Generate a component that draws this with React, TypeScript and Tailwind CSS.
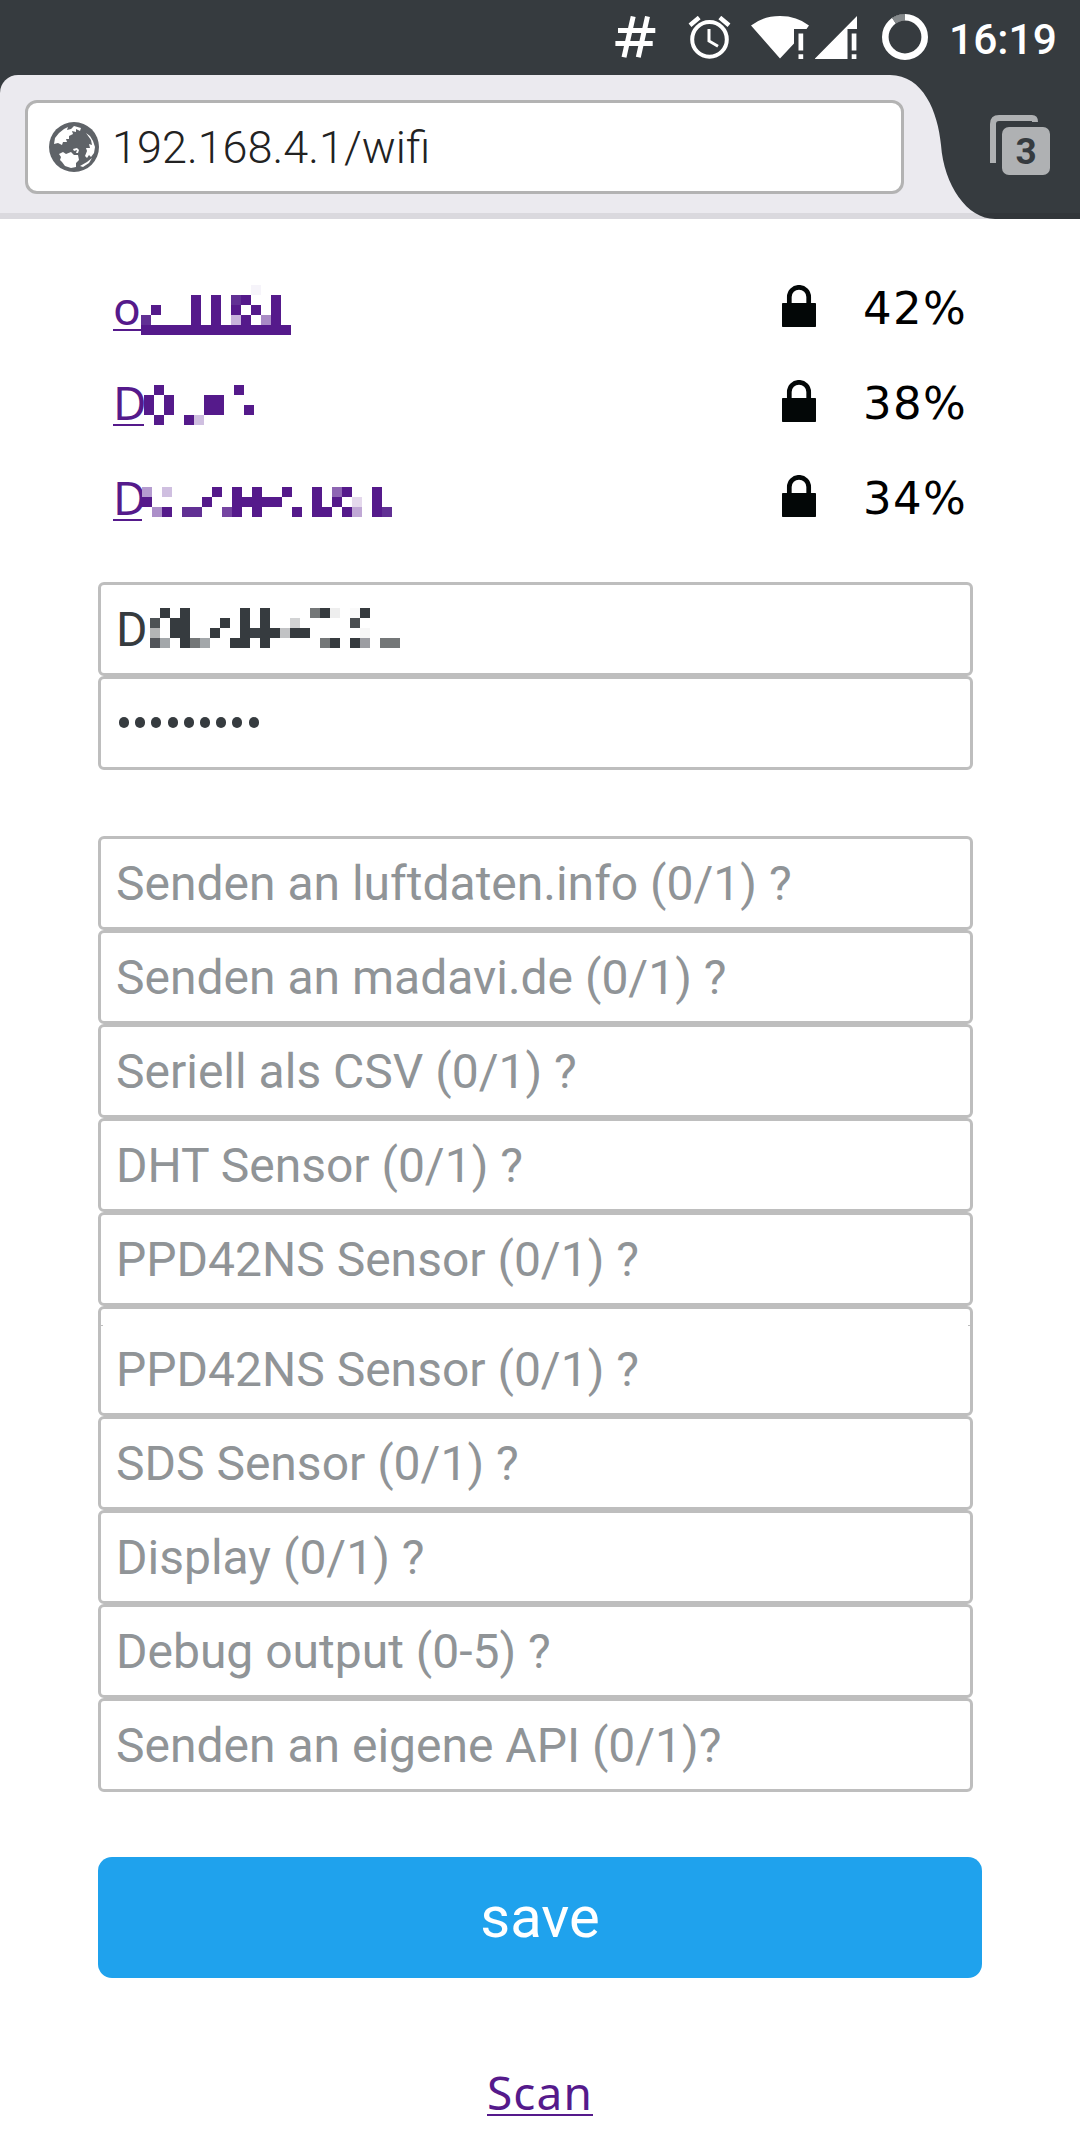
import type { ReactNode } from "react";

type Cell = [col: number, row: number, shade?: string];

const INK = "#551a8b";
const SLATE = "#363b3f";

/** Censored text, drawn as a mosaic of 10px blocks. */
function Mosaic({ cells, cols, rows, color, className }: { cells: Cell[]; cols: number; rows: number; color: string; className: string }) {
  return (
    <svg className={className} width={cols * 10} height={rows * 10} shapeRendering="crispEdges" aria-hidden="true">
      {cells.map(([c, r, shade]) => (
        <rect key={`${c}-${r}`} x={c * 10} y={r * 10} width="10" height="10" fill={shade ?? color} />
      ))}
    </svg>
  );
}

const firstMosaic: Cell[] = [
  [11, 0, "#f6f4fa"],
  [5, 1], [7, 1], [9, 1, "#613094"], [10, 1], [13, 1],
  [1, 2], [5, 2], [7, 2], [9, 2], [11, 2], [13, 2],
  [0, 3, "#613094"], [5, 3], [7, 3], [9, 3, "#c8b3db"], [10, 3], [12, 3, "#a98bc5"], [13, 3],
  ...Array.from({ length: 15 }, (_, i): Cell => [i, 4]),
];

const secondMosaic: Cell[] = [
  [1, 0], [9, 0],
  [0, 1], [2, 1], [6, 1], [7, 1],
  [0, 2], [2, 2], [6, 2], [7, 2], [10, 2],
  [1, 3], [4, 3], [5, 3, "#cfbfe0"],
];

const thirdMosaic: Cell[] = [
  [0, 0, "#b59cd0"], [2, 0, "#cfbfe0"], [7, 0], [9, 0], [11, 0], [14, 0], [17, 0], [19, 0, "#8e66b3"], [20, 0], [23, 0],
  [0, 1], [6, 1], [9, 1], [10, 1], [11, 1], [12, 1], [13, 1], [17, 1], [19, 1], [21, 1, "#e4d8ec"], [23, 1],
  [1, 2, "#ac8fc9"], [2, 2], [4, 2, "#613094"], [5, 2, "#613094"], [8, 2, "#7545a2"], [9, 2], [11, 2], [15, 2],
  [17, 2], [18, 2], [20, 2], [21, 2, "#c0a8d5"], [23, 2], [24, 2, "#613094"],
];

const ssidMosaic: Cell[] = [
  [1, 0], [3, 0], [9, 0], [11, 0], [16, 0, "#747778"], [17, 0], [18, 0, "#eeeeee"], [20, 0, "#fafafa"], [21, 0],
  [0, 1, "#4d5255"], [2, 1], [3, 1], [7, 1], [9, 1], [11, 1], [14, 1, "#d2d3d4"], [20, 1, "#4a4e51"],
  [0, 2, "#b3b5b6"], [2, 2], [3, 2], [6, 2], [9, 2], [10, 2, "#3c4146"], [11, 2], [12, 2], [13, 2, "#c1c2c4"],
  [14, 2], [15, 2], [21, 2, "#f7f7f7"],
  [0, 3, "#52555a"], [1, 3, "#a3a7aa"], [3, 3], [4, 3, "#747778"], [5, 3, "#a3a7aa"], [8, 3], [9, 3], [11, 3],
  [17, 3, "#747778"], [18, 3], [20, 3], [21, 3, "#9c9da2"], [23, 3, "#747778"], [24, 3, "#747778"],
];

function Lock() {
  return (
    <svg className="mt-[25px] shrink-0" width="34" height="42" viewBox="0 0 34 42">
      <path d="M7.3 21V12a9.7 9.7 0 0 1 19.4 0v9" fill="none" stroke="#030707" strokeWidth="4.7" />
      <rect y="18" width="34" height="24" rx="0.7" fill="#030707" />
    </svg>
  );
}

function Network({ initial, underline, mosaic, signal }: { initial: string; underline: string; mosaic: ReactNode; signal: string }) {
  return (
    <div className="flex h-[95px] items-start pr-[113px] pl-[113px] font-['Noto_Sans'] text-[46px] leading-[95px]">
      <a className={`flex shrink-0 border-b-2 border-[#551a8b] text-[#551a8b] ${underline}`}>{initial}</a>
      {mosaic}
      <div className="ml-auto flex">
        <Lock />
        <span className="w-[151px] text-right font-['DejaVu_Sans'] text-[45px] leading-[97px] tracking-[1.3px] whitespace-nowrap text-black">{signal}</span>
      </div>
    </div>
  );
}

function Field({ children, className = "h-[94px]" }: { children: ReactNode; className?: string }) {
  return (
    <div className={`flex w-[875px] items-start rounded-[6px] border-3 border-[#bebebe] bg-white pl-[15px] text-[48px] leading-[90px] whitespace-pre text-[#909497] ${className}`}>
      {children}
    </div>
  );
}

function StatusBar() {
  return (
    <div className="flex h-[75px] items-start text-white">
      <svg className="mt-4 ml-[615px]" width="41" height="42" viewBox="615 16 41 42" fill="none" stroke="currentColor" strokeWidth="5">
        <path d="M633.2 16.5 624 57.3M647.5 16.5 638.3 57.3M618 30.4h37.3M615.4 43.5h37.3" />
      </svg>
      <svg className="mt-4 ml-8" width="43" height="43" viewBox="688 16 43 43" fill="none" stroke="currentColor">
        <circle cx="709.5" cy="39.4" r="17.3" strokeWidth="4" />
        <path d="M709 29v12l9 5.2" strokeWidth="3" />
        <path d="M690 25.2 699.2 17.5M729 25.2 719.8 17.5" strokeWidth="4.4" />
      </svg>
      <svg className="mt-4 ml-[20px]" width="58" height="43" viewBox="751 16 58 43" fill="currentColor">
        <path d="M751 25.5Q763 16 780 16T809 25.5L806.5 29H794V43.5L780 58.5Z" />
        <path d="M798.5 33.5h4.7v17h-4.7zM798.5 54.3h4.7v4.7h-4.7z" />
      </svg>
      <svg className="mt-4 ml-[6px]" width="42" height="43" viewBox="815 16 42 43" fill="currentColor">
        <path d="M857 16V29H847.5V59H814.5Z" />
        <path d="M851.7 33.5h4.7v17h-4.7zM851.7 54.3h4.7v4.7h-4.7z" />
      </svg>
      <svg className="mt-[14px] ml-[25px]" width="46" height="46" viewBox="0 0 46 46" fill="none" strokeWidth="6.6">
        <circle cx="23" cy="23" r="19.7" stroke="white" />
        <path d="M12 6.7A19.7 19.7 0 0 1 23 3.3" stroke={SLATE} />
        <path d="M12 6.7A19.7 19.7 0 0 1 23 3.3" stroke="#868a8c" />
      </svg>
      <span className="mt-[15.5px] ml-[21px] text-[42.5px] leading-[48px] font-medium">16:19</span>
    </div>
  );
}

function Globe() {
  return (
    <svg className="ml-[21px] shrink-0" width="50" height="50" viewBox="0 0 50 50">
      <circle cx="25" cy="25" r="25" fill="#5f6368" />
      <g fill="white">
        <path d="M5 22 6 16 10 11 15 7 19 5 18 8 22 7 25 4 32 6 31 9 27 7 27 10 23 9 24 12 20 14 20 17 17 17 18 20 14 20 13 23 9 21Z" />
        <path d="M10 32 14 30 17 32 22 30 25 33 29 33 30 38 27 41 27 45 22 46 16 44 13 40 11 38 12 35Z" />
        <path d="M24 27 28 26 30 28 29 31 27 31 28 28 25 29Z" />
        <path d="M37 11 41 14 44 19 46 25 45 31 42 35 40 33 38 36 36 34 38 29 37 26 41 26 40 22 43 23 42 18Z" />
        <path d="M31 44 38 40 43 36 40 41 34 45Z" />
      </g>
    </svg>
  );
}

function AddressBar() {
  return (
    <div className="relative flex h-[144px]">
      <div className="relative z-10 w-[890px] shrink-0 rounded-tl-[18px] bg-[#ebeaef] pt-[25px] pl-[25px]">
        <div className="flex h-[94px] w-[879px] items-center rounded-[12px] border-3 border-[#b3b3b3] bg-white">
          <Globe />
          <span className="ml-[13px] pt-[1.5px] text-[45px] leading-[88px] font-light text-[#222222]">192.168.4.1/wifi</span>
        </div>
      </div>
      <svg className="shrink-0" width="105" height="144" viewBox="890 75 105 144">
        <path d="M890 75C923 75 938 112 941 145C944 185 967 219 995 219H890Z" fill="#ebeaef" />
      </svg>
      <svg className="mt-[40px] ml-[-5px]" width="60" height="60" viewBox="0 0 60 60">
        <path d="M3 48V9Q3 3 9 3H42Q45 3 45 7" fill="none" stroke="#afb1b3" strokeWidth="6" />
        <rect x="12" y="12" width="48" height="48" rx="7" fill="#afb1b3" />
        <text x="36" y="49" textAnchor="middle" fontSize="37" fontWeight="700" fill={SLATE}>3</text>
      </svg>
      <div className="absolute bottom-0 left-0 z-20 h-[6px] w-full bg-black/7" />
    </div>
  );
}

export default function App() {
  return (
    <div className="h-[2149px] w-[1080px] overflow-hidden bg-white font-['Roboto',sans-serif]">
      <header className="bg-[#363b3f]">
        <StatusBar />
        <AddressBar />
      </header>

      <section className="pt-[41px]">
        <Network
          initial="o"
          underline="h-[71px] w-[28px]"
          mosaic={<Mosaic className="mt-[25px] shrink-0" cells={firstMosaic} cols={15} rows={5} color={INK} />}
          signal="42%"
        />
        <Network
          initial="D"
          underline="h-[71px] w-[31px]"
          mosaic={<Mosaic className="mt-[30px] shrink-0" cells={secondMosaic} cols={11} rows={4} color={INK} />}
          signal="38%"
        />
        <Network
          initial="D"
          underline="h-[71px] w-[29px]"
          mosaic={<Mosaic className="mt-[37px] shrink-0" cells={thirdMosaic} cols={25} rows={3} color={INK} />}
          signal="34%"
        />
      </section>

      <form className="mt-[37px] ml-[98px]">
        <Field>
          <span className="w-[34px] shrink-0 text-[#363b3f]">D</span>
          <Mosaic className="mt-[23px]" cells={ssidMosaic} cols={25} rows={4} color={SLATE} />
        </Field>
        <Field>
          <div className="flex h-[86px] items-center gap-[6.2px] pl-[3px]">
            {Array.from({ length: 9 }, (_, i) => (
              <span key={i} className="h-[11px] w-[10px] rounded-full bg-[#363b3f]" />
            ))}
          </div>
        </Field>

        <div className="mt-[66px]">
          <Field>Senden an luftdaten.info (0/1) ?</Field>
          <Field>Senden an madavi.de (0/1) ?</Field>
          <Field>Seriell als CSV (0/1) ?</Field>
          <Field>DHT Sensor (0/1) ?</Field>
          <Field>PPD42NS Sensor (0/1) ?</Field>
          <Field className="relative h-[110px] pt-[16px] before:absolute before:top-[16px] before:left-0 before:h-px before:w-[2px] before:bg-[#bebebe] after:absolute after:top-[16px] after:right-0 after:h-px after:w-[2px] after:bg-[#bebebe]">
            PPD42NS Sensor (0/1) ?
          </Field>
          <Field>SDS Sensor (0/1) ?</Field>
          <Field>Display (0/1) ?</Field>
          <Field>Debug output (0-5) ?</Field>
          <Field>Senden an eigene API (0/1)?</Field>
        </div>

        <button type="button" className="mt-[65px] block h-[121px] w-[884px] rounded-[14px] bg-[#1fa2ed] text-center text-[58px] leading-[121px] text-white">
          save
        </button>
      </form>

      <div className="mt-[67px] flex justify-center">
        <a className="h-[71px] border-b-2 border-[#551a8b] font-['Noto_Sans'] text-[46px] leading-[95px] tracking-[1.1px] text-[#551a8b]">Scan</a>
      </div>
    </div>
  );
}
